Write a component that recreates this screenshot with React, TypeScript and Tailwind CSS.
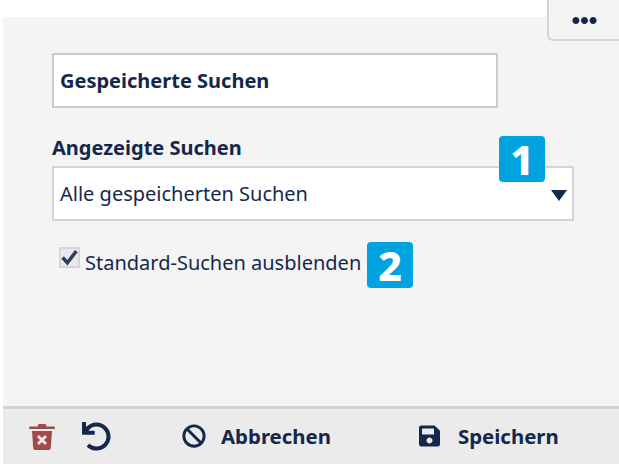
import { FaBan, FaEllipsisH, FaSave, FaUndo } from "react-icons/fa";

function Badge({ label, className }: { label: string; className: string }) {
  return (
    <div
      className={`absolute flex h-[46px] w-[46px] items-center justify-center rounded-[4px] bg-[#00a2e0] text-[41px] font-extrabold leading-none text-white ${className}`}
    >
      {label}
    </div>
  );
}

function TrashIcon() {
  return (
    <svg viewBox="0 0 26 30" className="h-[30px] w-[26px]">
      <path
        d="M1 5.5h7.5l1-2.5h7l1 2.5H25a1 1 0 0 1 0 2.5H1a1 1 0 0 1 0-2.5z"
        fill="#a04a4a"
      />
      <path
        d="M3 10h20l-1.2 17a2 2 0 0 1-2 2H6.2a2 2 0 0 1-2-2z"
        fill="#a04a4a"
      />
      <path
        d="M9 15l8 8M17 15l-8 8"
        stroke="#f4e9e9"
        strokeWidth="2.8"
        strokeLinecap="butt"
      />
    </svg>
  );
}

export default function App() {
  return (
    <div className="relative flex h-[464px] w-[619px] flex-col overflow-hidden bg-white pl-[3px] pt-[17px] font-['Noto_Sans','Open_Sans',sans-serif] text-[#14284b]">
      <div className="flex flex-1 flex-col bg-[#f4f4f4]">
        <div className="flex-1 pl-[49px] pr-[45px] pt-[36px]">
          <div className="flex h-[55px] w-[446px] items-center border-2 border-[#cccccc] bg-white pl-[6px] pt-[1px] text-[20px] font-bold">
            Gespeicherte Suchen
          </div>
          <div className="mt-[22px] text-[20px] font-bold leading-[36px]">
            Angezeigte Suchen
          </div>
          <div className="flex h-[55px] w-[522px] items-center justify-between border-2 border-[#d4d4d4] bg-white pl-[6px] pr-[1px] text-[20px]">
            <span className="pt-[1px]">Alle gespeicherten Suchen</span>
            <svg viewBox="0 0 16 11" className="mb-[-3px] mr-[4px] h-[11px] w-[16px]">
              <path d="M0 0h16l-8 11z" fill="#14284b" />
            </svg>
          </div>
          <label className="mt-[22px] flex items-start pl-[7px] text-[20px]">
            <span className="mt-[4px] flex h-[21px] w-[21px] items-center justify-center border-2 border-[#d6d6d6] bg-[#e9e9e9]">
              <svg viewBox="0 0 16 16" className="h-[19px] w-[19px] shrink-0">
                <path
                  d="M2.2 8l4 4.4L13.8 2.6"
                  fill="none"
                  stroke="#2f3f5f"
                  strokeWidth="3"
                />
              </svg>
            </span>
            <span className="ml-[5px] mt-[5px]">Standard-Suchen ausblenden</span>
          </label>
        </div>
        <div className="flex h-[58px] items-center border-t-[3px] border-[#d3d3d3] bg-[#ebebeb] pb-[1px]">
          <div className="ml-[26px] flex items-center">
            <TrashIcon />
          </div>
          <FaUndo className="ml-[27px] h-[29px] w-[29px] text-[#14284b]" />
          <div className="ml-[71px] flex items-center text-[20.4px] font-bold">
            <FaBan className="h-[24px] w-[24px]" />
            <span className="ml-[15px]">Abbrechen</span>
          </div>
          <div className="ml-[87px] flex items-center text-[20.4px] font-bold">
            <FaSave className="h-[24px] w-[23px]" />
            <span className="ml-[17px]">Speichern</span>
          </div>
        </div>
      </div>
      <button className="absolute right-0 top-0 flex h-[41px] w-[72px] items-center justify-center rounded-bl-[6px] border-b-2 border-l-2 border-[#d4d4d4] bg-[#f4f4f4] pt-[2px]">
        <FaEllipsisH className="h-[25px] w-[25px] text-[#14284b]" />
      </button>
      <Badge label="1" className="left-[499px] top-[136px]" />
      <Badge label="2" className="left-[367px] top-[242px]" />
    </div>
  );
}
